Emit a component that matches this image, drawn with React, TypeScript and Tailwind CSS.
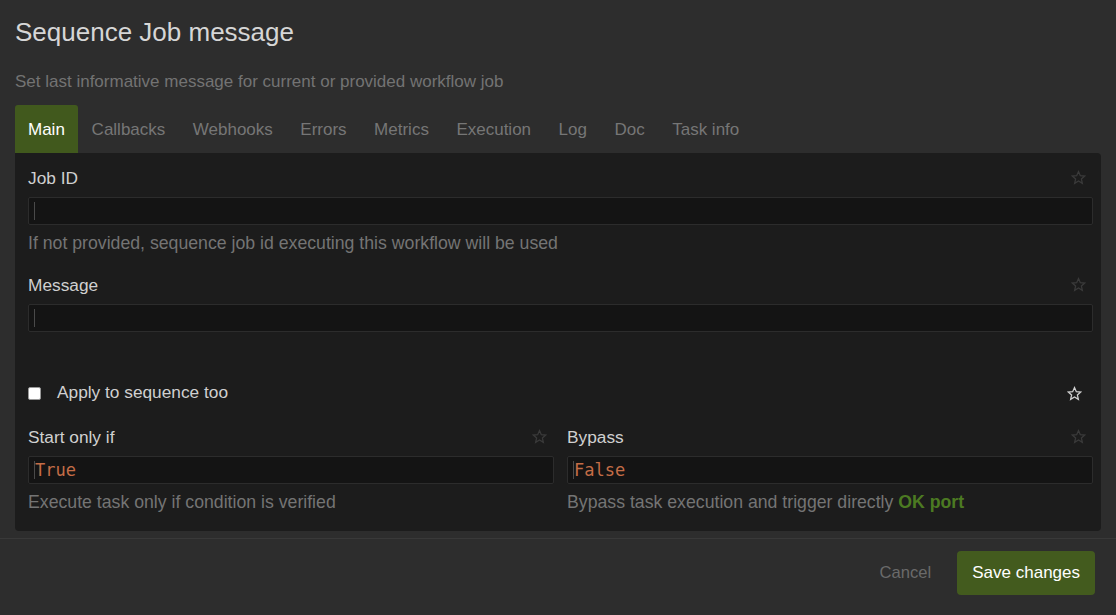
import React from 'react'

const tabs = ['Main', 'Callbacks', 'Webhooks', 'Errors', 'Metrics', 'Execution', 'Log', 'Doc', 'Task info']

function Star({ className }: { className?: string }) {
  return (
    <svg viewBox="0 0 24 24" className={className} fill="none" stroke="currentColor" strokeWidth="2" strokeLinejoin="miter">
      <path d="M12 2.5l2.9 6.6 7.1.6-5.4 4.7 1.6 7-6.2-3.7-6.2 3.7 1.6-7L2 9.7l7.1-.6z" />
    </svg>
  )
}

function Field({ label, value, help, starClass = 'text-[#3a3a3a]' }: { label: string; value?: string; help?: React.ReactNode; starClass?: string }) {
  return (
    <div>
      <div className="flex items-center justify-between h-6">
        <span className="text-[17.3px] text-[#d0d0d0]">{label}</span>
        <Star className={`w-[15px] h-[15px] mr-[7px] -mt-1 ${starClass}`} />
      </div>
      <div className="mt-[6px] h-[28px] bg-[#141414] border border-[#2c2c2c] rounded-[2px] flex items-center pl-[5px]">
        <span className="w-px h-[18px] bg-[#4a4a4a]" />
        {value && (
          <span className="text-[17px] text-[#c46d47] font-['DejaVu_Sans_Mono',monospace] leading-none">{value}</span>
        )}
      </div>
      {help && <div className="mt-[6px] h-6 leading-6 text-[17.7px] text-[#747474] whitespace-nowrap">{help}</div>}
    </div>
  )
}

export default function App() {
  return (
    <div className="w-[1116px] h-[615px] bg-[#2d2d2d] font-['Liberation_Sans',Arial,sans-serif] flex flex-col overflow-hidden">
      <div className="px-[15px] pt-4">
        <h1 className="text-[26px] leading-8 text-[#d6d6d6]">Sequence Job message</h1>
        <p className="mt-[22px] text-[17px] leading-6 text-[#737373]">Set last informative message for current or provided workflow job</p>

        <div className="mt-[11px] flex">
          {tabs.map((t, i) => (
            <div
              key={t}
              className={`h-12 pt-[2px] flex items-center text-[17px] ${i === 0 ? 'px-[13px] bg-[#41591d] text-white rounded-t-[3px]' : 'px-[13.75px] text-[#767676]'}`}
            >
              {t}
            </div>
          ))}
        </div>

        <div className="bg-[#1c1c1c] rounded-b-[4px] rounded-tr-[4px] pl-[13px] pr-[8px] pt-[14px] pb-[17px]">
          <Field label="Job ID" help="If not provided, sequence job id executing this workflow will be used" />
          <div className="mt-[19px]">
            <Field label="Message" />
          </div>

          <div className="mt-[49px] h-6 flex items-center justify-between">
            <label className="flex items-center gap-4 text-[17.3px] text-[#d0d0d0]">
              <span className="w-[13px] h-[13px] bg-white rounded-[2px] border border-[#999]" />
              Apply to sequence too
            </label>
            <Star className="w-[15px] h-[15px] mr-[11px] text-[#d0d0d0]" />
          </div>

          <div className="mt-[21px] grid grid-cols-2 gap-[13px]">
            <Field label="Start only if" value="True" help="Execute task only if condition is verified" />
            <Field
              label="Bypass"
              value="False"
              help={
                <>
                  Bypass task execution and trigger directly <span className="font-bold text-[#4c7a22]">OK port</span>
                </>
              }
            />
          </div>
        </div>
      </div>

      <div className="mt-[7px] border-t border-[#393939] flex justify-end items-center gap-[26px] pr-[21px] pt-3">
        <span className="text-[16.6px] text-[#6a6a6a]">Cancel</span>
        <button className="h-11 px-[15px] bg-[#435b1e] rounded-[4px] text-[17px] text-white">Save changes</button>
      </div>
    </div>
  )
}
